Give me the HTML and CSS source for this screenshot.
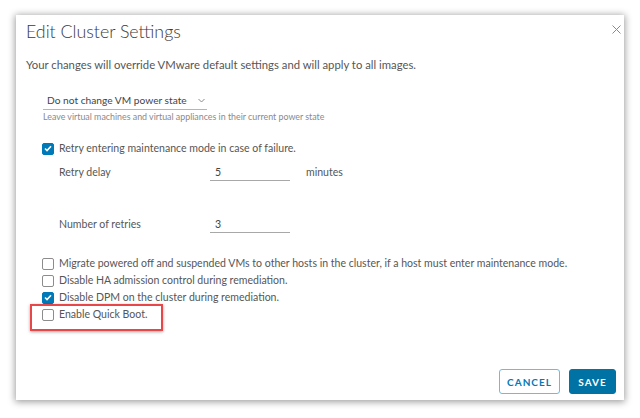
FILE: index.html
```html
<!DOCTYPE html>
<html>
<head>
<meta charset="utf-8">
<link rel="stylesheet" href="styles.css">
</head>
<body>
<div class="dialog">
  <div class="header">
    <div class="title">Edit Cluster Settings</div>
    <svg class="close" width="9" height="9" viewBox="0 0 9 9"><path d="M0.5 0.5L8.5 8.5M8.5 0.5L0.5 8.5" stroke="#8a8a8a" stroke-width="1" fill="none"/></svg>
  </div>
  <div class="intro">Your changes will override VMware default settings and will apply to all images.</div>
  <div class="body">
    <div class="select">Do not change VM power state
      <svg class="chev" width="7" height="5" viewBox="0 0 7 5"><path d="M0.5 1L3.5 4L6.5 1" stroke="#8a8a8a" stroke-width="1" fill="none"/></svg>
    </div>
    <div class="help">Leave virtual machines and virtual appliances in their current power state</div>

    <div class="check retry">
      <span class="box on"><svg width="8" height="7" viewBox="0 0 8 7"><path d="M1 3.5L3 5.5L7 1.2" stroke="#fff" stroke-width="1.6" fill="none"/></svg></span>
      <span>Retry entering maintenance mode in case of failure.</span>
    </div>
    <div class="field first">
      <span class="flabel">Retry delay</span>
      <span class="input">5</span>
      <span class="unit">minutes</span>
    </div>
    <div class="field second">
      <span class="flabel">Number of retries</span>
      <span class="input">3</span>
    </div>

    <div class="options">
      <div class="check">
        <span class="box"></span>
        <span>Migrate powered off and suspended VMs to other hosts in the cluster, if a host must enter maintenance mode.</span>
      </div>
      <div class="check">
        <span class="box"></span>
        <span>Disable HA admission control during remediation.</span>
      </div>
      <div class="check">
        <span class="box on"><svg width="8" height="7" viewBox="0 0 8 7"><path d="M1 3.5L3 5.5L7 1.2" stroke="#fff" stroke-width="1.6" fill="none"/></svg></span>
        <span>Disable DPM on the cluster during remediation.</span>
      </div>
      <div class="check quick">
        <span class="box"></span>
        <span>Enable Quick Boot.</span>
        <span class="highlight"></span>
      </div>
    </div>
  </div>
  <div class="footer">
    <button class="btn cancel">CANCEL</button>
    <button class="btn save">SAVE</button>
  </div>
</div>
</body>
</html>
```
FILE: styles.css
```css
html, body {
  margin: 0;
  padding: 0;
  background: #fff;
}
body {
  width: 640px;
  height: 418px;
  overflow: hidden;
  font-family: Lato, "Noto Sans", sans-serif;
  color: #565656;
}
.dialog {
  margin: 15px 0 0 16px;
  width: 608px;
  height: 385px;
  box-sizing: border-box;
  background: #fff;
  box-shadow: 0 1px 7px 1px rgba(0,0,0,0.38);
  padding: 3px 3px 0 10px;
  display: flex;
  flex-direction: column;
}
.header {
  display: flex;
  justify-content: space-between;
  align-items: flex-start;
}
.title {
  font-size: 17.8px;
  line-height: 26px;
  color: #3a3a3a;
  font-weight: 300;
}
.close {
  margin-top: 7px;
}
.intro {
  margin-top: 12px;
  font-size: 11.3px;
  line-height: 18px;
}
.body {
  padding-left: 16px;
  flex: 1;
}
.select {
  margin-top: 18px;
  margin-left: 1px;
  width: 164px;
  box-sizing: border-box;
  padding: 0 0 1px 4px;
  border-bottom: 1px solid #b5b5b5;
  font-size: 10.2px;
  line-height: 16px;
  color: #444;
  display: flex;
  align-items: center;
  white-space: nowrap;
}
.chev {
  margin-left: 11px;
}
.help {
  font-size: 8.85px;
  line-height: 14px;
  color: #8a8a8a;
  margin-left: 1px;
  white-space: nowrap;
}
.check {
  display: flex;
  align-items: center;
  font-size: 10.55px;
  line-height: 17px;
  color: #565656;
  position: relative;
  white-space: nowrap;
}
.retry {
  margin-top: 16px;
}
.box {
  width: 12px;
  height: 12px;
  box-sizing: border-box;
  border: 1px solid #8c8c8c;
  border-radius: 2px;
  margin-right: 5px;
  display: flex;
  align-items: center;
  justify-content: center;
  flex: none;
  background: #fff;
}
.box.on {
  background: #0079b8;
  border-color: #0079b8;
}
.field {
  display: flex;
  align-items: flex-start;
  padding-left: 17px;
  font-size: 10.55px;
  line-height: 16px;
}
.field.first {
  margin-top: 7px;
}
.field.second {
  margin-top: 35px;
}
.flabel {
  width: 151px;
}
.input {
  width: 80px;
  box-sizing: border-box;
  padding-left: 5px;
  border-bottom: 1px solid #a8a8a8;
  color: #444;
}
.unit {
  margin-left: 16px;
}
.options {
  margin-top: 22px;
}
.highlight {
  position: absolute;
  left: -12px;
  top: -2px;
  width: 133px;
  height: 27px;
  box-sizing: border-box;
  border: 2px solid #e8474a;
  box-shadow: 0 1px 3px rgba(0,0,0,0.35);
}
.footer {
  display: flex;
  justify-content: flex-end;
  gap: 9px;
  padding-right: 5px;
  padding-bottom: 6px;
}
.btn {
  height: 25px;
  box-sizing: border-box;
  font-family: Lato, "Noto Sans", sans-serif;
  font-size: 10px;
  font-weight: 700;
  letter-spacing: 1px;
  border-radius: 3px;
  padding: 0;
  cursor: pointer;
}
.cancel {
  width: 61px;
  background: #fff;
  border: 1px solid #6fbbe0;
  color: #0079b8;
}
.save {
  width: 47px;
  background: #0072a3;
  border: 1px solid #0072a3;
  color: #fff;
}
```
